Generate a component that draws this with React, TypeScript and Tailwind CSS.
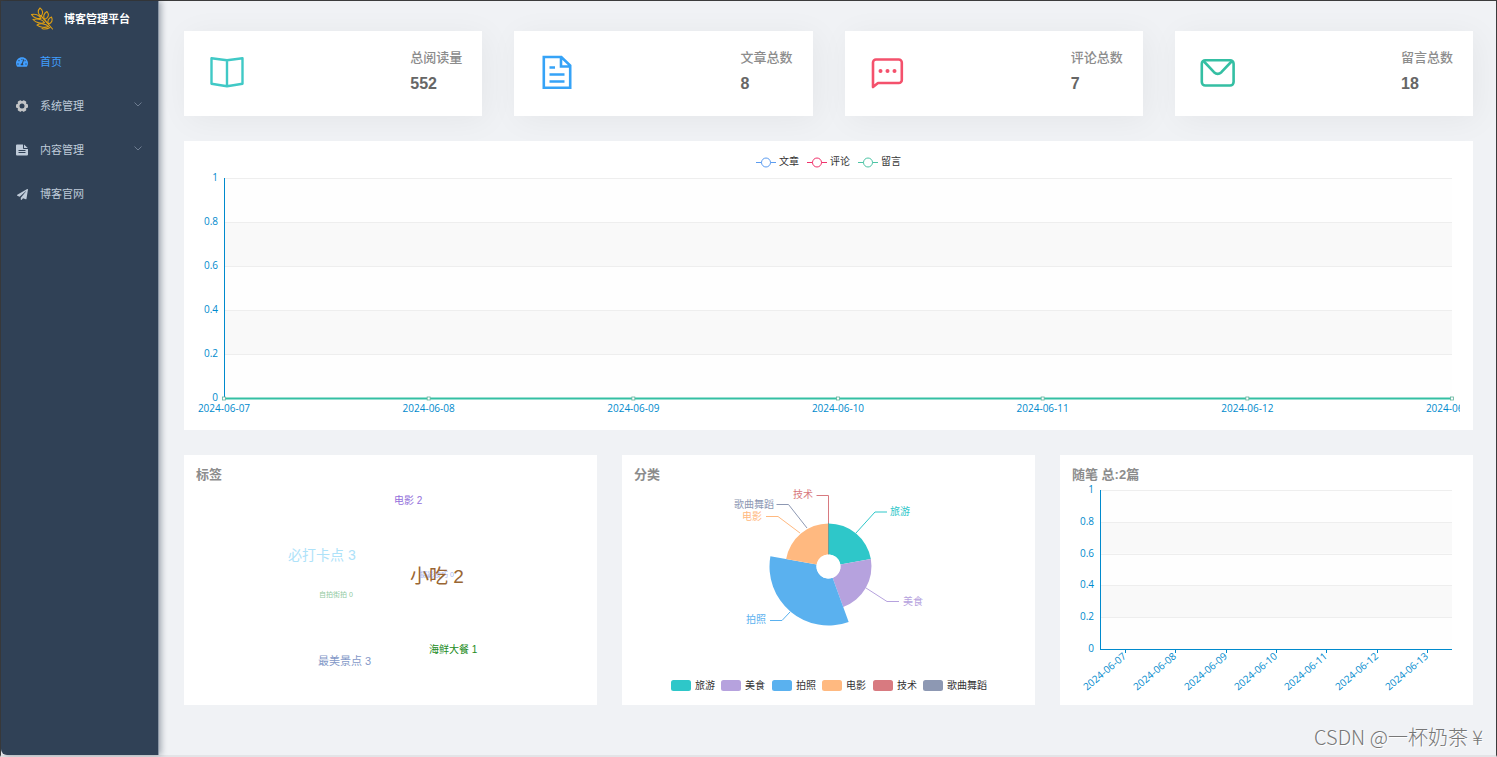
import type { ReactNode } from "react";
import { FaPaperPlane, FaTachometerAlt } from "react-icons/fa";

const DAYS = ["2024-06-07", "2024-06-08", "2024-06-09", "2024-06-10", "2024-06-11", "2024-06-12", "2024-06-13"];
const TICKS = ["0", "0.2", "0.4", "0.6", "0.8", "1"];
const AXIS = "#008acd";

/* ---------- icons ---------- */

function LogoIcon() {
  return (
    <svg viewBox="0 0 24 24" className="size-6" fill="none" stroke="#e0a012" strokeWidth="1.100" strokeLinejoin="round" strokeLinecap="round">
      <path d="M22.500 22C19 18 15 13 10.500 8.500" />
      <path d="M11 9.500C7.500 7 7.500 3.500 10 1c3 2 3.500 5.500 1 8.500z" />
      <path d="M14.500 12.500C13 9.500 14 6.500 17 4.500c2.500 3 1.500 6.500-2.500 8z" />
      <path d="M18.500 17c-1.500-3 0-6 3-7 1.500 3 .5 6-3 7z" />
      <path d="M11 11.500C8 12 3.500 11 1.500 7.500c3.500-1 7.500.5 9.500 4z" />
      <path d="M14.500 15.500c-3 1.500-8.500.5-11.500-3 4-1 8.500-.5 11.500 3z" />
      <path d="M18.500 19.500c-3.500 1.500-8.500 1-11.500-1.500 3.500-2 8.500-1.500 11.500 1.500z" />
      <path d="M20 20.500c-2.500 1.500-5.500 2-8 1" />
    </svg>
  );
}

function GearIcon() {
  return (
    <svg viewBox="0 0 12 12" className="size-3 text-[#c3c5c7]">
      <g fill="currentColor">
        <circle cx="6" cy="6" r="4.900" />
        <rect x="0" y="4" width="12" height="4" rx="1.200" />
        <rect x="0" y="4" width="12" height="4" rx="1.200" transform="rotate(60 6 6)" />
        <rect x="0" y="4" width="12" height="4" rx="1.200" transform="rotate(120 6 6)" />
      </g>
      <circle cx="6" cy="6" r="2.500" fill="#304156" />
    </svg>
  );
}

function DocumentFillIcon() {
  return (
    <svg viewBox="0 0 12 12" className="size-3">
      <path fill="currentColor" d="M1 .5h6v3.500c0 .6.4 1 1 1h4v5.500a1 1 0 0 1-1 1H1a1 1 0 0 1-1-1v-9a1 1 0 0 1 1-1zM8 .5l3.800 3.500H8z" />
      <path stroke="#304156" strokeWidth="1" d="M2.500 6.500h7M2.500 8.500h7" />
    </svg>
  );
}

function ChevronIcon() {
  return (
    <svg viewBox="0 0 8 5" className="mb-1 ml-auto h-[5px] w-2" fill="none" stroke="#7d8ba0" strokeWidth="0.800">
      <path d="M.5.5 4 4 7.500.5" />
    </svg>
  );
}

function BookIcon() {
  return (
    <svg viewBox="0 0 36 36" className="size-9" fill="none" stroke="#40c9c6" strokeWidth="2.400" strokeLinejoin="round">
      <path d="M18 6.300Q10 5.500 2.500 4.300v25.400Q10 31 18 32.200Q26 31 33.500 29.700V4.300Q26 5.500 18 6.300zM18 6.300v25.900" />
    </svg>
  );
}

function ArticleIcon() {
  return (
    <svg viewBox="0 0 36 36" className="size-9" fill="none" stroke="#36a3f7" strokeWidth="2.600">
      <path d="M4.800 3h17.500L31.200 11.500v22.300H4.800zM22 3.500v9h9M10.500 13.500H16M10.500 20.500h15M10.500 27.500h15" />
    </svg>
  );
}

function CommentIcon() {
  return (
    <svg viewBox="0 0 36 36" className="size-9" fill="none" stroke="#f4516c" strokeWidth="2.600" strokeLinejoin="round">
      <path d="M3 33V8.500a3 3 0 0 1 3-3h22.800a3 3 0 0 1 3 3V26a3 3 0 0 1-3 3H8z" />
      <g fill="#f4516c" stroke="none">
        <circle cx="10.500" cy="17" r="2" />
        <circle cx="17.500" cy="17" r="2" />
        <circle cx="24.500" cy="17" r="2" />
      </g>
    </svg>
  );
}

function MailIcon() {
  return (
    <svg viewBox="0 0 36 36" className="size-9" fill="none" stroke="#34bfa3" strokeWidth="2.600" strokeLinejoin="round">
      <rect x="1.800" y="6.200" width="31.800" height="25.300" rx="3.500" />
      <path d="M3.500 7 14 18.200q3.700 3.400 7.400 0L32 7" />
    </svg>
  );
}

/* ---------- sidebar ---------- */

function MenuLabel({ icon, text }: { icon: ReactNode; text: string }) {
  return (
    <>
      <span className="mr-3 flex size-3 shrink-0 items-center justify-center">{icon}</span>
      <span>{text}</span>
    </>
  );
}

function Sidebar() {
  return (
    <aside className="z-10 w-[158px] shrink-0 rounded-bl-md border-r border-[#8a96a5] bg-[#304156] shadow-[2px_0_6px_rgba(0,21,41,0.35)]">
      <div className="mb-[3px] flex h-9 items-center pl-[29px]">
        <LogoIcon />
        <h1 className="ml-[10px] text-[11px] font-bold text-white">博客管理平台</h1>
      </div>
      <nav className="text-[11px] text-[#bfcbd9]">
        <a href="#home" className="flex h-11 items-center px-[15px] text-[#409eff]">
          <MenuLabel icon={<FaTachometerAlt className="size-3" />} text="首页" />
        </a>
        <button type="button" className="flex h-11 w-full items-center pr-4 pl-[15px]">
          <MenuLabel icon={<GearIcon />} text="系统管理" />
          <ChevronIcon />
        </button>
        <button type="button" className="flex h-11 w-full items-center pr-4 pl-[15px]">
          <MenuLabel icon={<DocumentFillIcon />} text="内容管理" />
          <ChevronIcon />
        </button>
        <a href="#site" className="flex h-11 items-center px-[15px]">
          <MenuLabel icon={<FaPaperPlane className="size-[11px]" />} text="博客官网" />
        </a>
      </nav>
    </aside>
  );
}

/* ---------- cards ---------- */

const STATS = [
  { label: "总阅读量", value: 552, icon: <BookIcon /> },
  { label: "文章总数", value: 8, icon: <ArticleIcon /> },
  { label: "评论总数", value: 7, icon: <CommentIcon /> },
  { label: "留言总数", value: 18, icon: <MailIcon /> },
];

function StatCard({ label, value, icon }: { label: string; value: number; icon: ReactNode }) {
  return (
    <div className="flex h-[85px] items-center justify-between bg-white pr-5 pb-[3px] pl-[25px] shadow-[4px_4px_32px_rgba(0,0,0,0.05)]">
      {icon}
      <div>
        <p className="mb-1 text-[13px] leading-5 font-medium text-[#8c8c8c]">{label}</p>
        <p className="text-base leading-6 font-bold text-[#666]">{value}</p>
      </div>
    </div>
  );
}

function Card({ title, children }: { title: string; children: ReactNode }) {
  return (
    <section className="bg-white p-3">
      <h2 className="text-[13px] leading-4 font-bold text-[#8c8c8c]">{title}</h2>
      {children}
    </section>
  );
}

/* ---------- charts ---------- */

function Grid({ left, right, top, bottom }: { left: number; right: number; top: number; bottom: number }) {
  const step = (bottom - top) / 5;
  return (
    <g>
      {TICKS.map((t, i) => {
        const y = Math.round(bottom - i * step);
        return (
          <g key={t}>
            {i < 5 && (
              <rect x={left} y={bottom - (i + 1) * step} width={right - left} height={step} fill={i % 2 ? "#f9f9f9" : "#fefefe"} />
            )}
            {i > 0 && <path d={`M${left} ${y + 0.5}H${right}`} stroke="#eee" />}
            <text x={left - 6} y={y + 3} textAnchor="end" fontSize="10" fill={AXIS}>
              {t}
            </text>
          </g>
        );
      })}
      <path d={`M${left + 0.5} ${top}V${bottom + 1}`} stroke={AXIS} />
    </g>
  );
}

function VisitChart() {
  const legend = [
    { name: "文章", color: "#5b9cf0" },
    { name: "评论", color: "#f0326b" },
    { name: "留言", color: "#4cc4a5" },
  ];
  return (
    <svg viewBox="0 0 1264 265" className="block h-auto w-full" role="img" aria-label="近七日趋势">
      {legend.map((l, i) => (
        <g key={l.name}>
          <path d={`M${560 + i * 51} 9.500h20`} stroke={l.color} />
          <circle cx={570 + i * 51} cy="9.500" r="4.500" fill="#fff" stroke={l.color} />
          <text x={583 + i * 51} y="12" fontSize="10" fill="#333">
            {l.name}
          </text>
        </g>
      ))}
      <Grid left={28} right={1256} top={25} bottom={245} />
      <path d="M28 245.500H1256" stroke="#34bfa3" strokeWidth="2" />
      {DAYS.map((d, i) => {
        const x = 28 + (i * 1228) / 6;
        return (
          <g key={d}>
            <rect x={x - 1.5} y="244" width="3" height="3" fill="#fff" stroke="#5fb39c" strokeWidth="0.800" />
            <text x={x} y="259" textAnchor="middle" fontSize="10" fill={AXIS}>
              {d}
            </text>
          </g>
        );
      })}
    </svg>
  );
}

const TAGS = [
  { text: "电影 2", x: 198, y: 21, size: 10, color: "#9370db" },
  { text: "必打卡点 3", x: 92, y: 77, size: 14, color: "#aee2f9" },
  { text: "摄影技巧 0", x: 224, y: 94, size: 7, color: "#a4b4ee" },
  { text: "小吃 2", x: 214, y: 100, size: 19, color: "#996633" },
  { text: "自拍街拍 0", x: 123, y: 114, size: 7, color: "#8fc9a0" },
  { text: "海鲜大餐 1", x: 233, y: 170, size: 10, color: "#228b22" },
  { text: "最美景点 3", x: 122, y: 182, size: 11, color: "#8499c8" },
];

function TagCloud() {
  return (
    <svg viewBox="0 0 389 210" className="block h-auto w-full" role="img" aria-label="标签云">
      {TAGS.map((t) => (
        <text key={t.text} x={t.x} y={t.y} fontSize={t.size} fill={t.color}>
          {t.text}
        </text>
      ))}
    </svg>
  );
}

const SLICES = [
  { name: "旅游", color: "#2ec7c9", from: 0, to: 80, r: 43, line: "M222 50 241 29h12", tx: 256, ty: 32, lx: 37 },
  { name: "美食", color: "#b6a2de", from: 80, to: 160, r: 43, line: "M232 105 253 118.500h12", tx: 269, ty: 122, lx: 87 },
  { name: "拍照", color: "#5ab1ef", from: 160, to: 280, r: 59, line: "M156 129 148 137.500h-12", tx: 112, ty: 140, lx: 138 },
  { name: "电影", color: "#ffb980", from: 280, to: 360, r: 43, line: "M166 50 144 33.500h-12", tx: 108, ty: 37, lx: 188 },
  { name: "技术", color: "#d87a80", from: 360, to: 360, r: 43, line: "M194.500 83V12.500h-12", tx: 159, ty: 15, lx: 239 },
  { name: "歌曲舞蹈", color: "#8d98b3", from: 360, to: 360, r: 43, line: "M173 45 154.500 21.500h-12", tx: 100, ty: 25, lx: 289 },
];

function polar(r: number, deg: number) {
  const a = (deg * Math.PI) / 180;
  return `${(194.5 + r * Math.sin(a)).toFixed(2)} ${(83.5 - r * Math.cos(a)).toFixed(2)}`;
}

function RosePie() {
  return (
    <svg viewBox="0 0 389 210" className="block h-auto w-full" fontSize="10" role="img" aria-label="文章分类">
      {SLICES.map((s) => (
        <g key={s.name}>
          {s.to > s.from && (
            <path
              fill={s.color}
              d={`M${polar(12, s.from)}L${polar(s.r, s.from)}A${s.r} ${s.r} 0 0 1 ${polar(s.r, s.to)}L${polar(12, s.to)}A12 12 0 0 0 ${polar(12, s.from)}Z`}
            />
          )}
          <path d={s.line} fill="none" stroke={s.color} />
          <text x={s.tx} y={s.ty} fill={s.color}>
            {s.name}
          </text>
          <rect x={s.lx} y="197" width="20" height="11" rx="2.500" fill={s.color} />
          <text x={s.lx + 24} y="206" fill="#333">
            {s.name}
          </text>
        </g>
      ))}
      <path d="M194.500 40V71.500" stroke="#6f9d97" />
      <circle cx="194.500" cy="83.500" r="12" fill="#fff" />
    </svg>
  );
}

function EssayChart() {
  return (
    <svg viewBox="0 0 389 210" className="block h-auto w-full" role="img" aria-label="随笔">
      <Grid left={28} right={380} top={7} bottom={166} />
      <path d="M28 166.500H380" stroke={AXIS} />
      {DAYS.map((d, i) => {
        const x = Math.round(28 + (i + 0.5) * 50.3);
        return (
          <g key={d}>
            <path d={`M${x + 0.5} 167v3`} stroke={AXIS} />
            <text x={x} y="172" dy="3" textAnchor="end" fontSize="10" fill={AXIS} transform={`rotate(-40 ${x} 172)`}>
              {d}
            </text>
          </g>
        );
      })}
    </svg>
  );
}

export default function App() {
  return (
    <div className="relative flex min-h-screen border border-b-2 border-[#3c3c3c] border-b-[#e3e4e7] bg-[#f0f2f5] font-['Liberation_Sans','Noto_Sans_CJK_SC',sans-serif]">
      <Sidebar />
      <main className="flex min-w-0 flex-1 flex-col gap-[25px] pt-[30px] pr-[23px] pb-6 pl-[25px]">
        <div className="grid grid-cols-4 gap-8">
          {STATS.map((s) => (
            <StatCard key={s.label} {...s} />
          ))}
        </div>
        <section className="bg-white py-3 pr-[13px] pl-3 font-['Open_Sans','Noto_Sans_CJK_SC',sans-serif]">
          <VisitChart />
        </section>
        <div className="grid grid-cols-3 gap-[25px]">
          <Card title="标签">
            <TagCloud />
          </Card>
          <Card title="分类">
            <RosePie />
          </Card>
          <Card title="随笔 总:2篇">
            <div className="font-['Open_Sans','Noto_Sans_CJK_SC',sans-serif]">
              <EssayChart />
            </div>
          </Card>
        </div>
      </main>
      <p className="absolute right-[13px] bottom-1 font-['Noto_Sans_CJK_SC',sans-serif] text-xl leading-7 font-light text-[#777] [text-shadow:1px_1px_0_#fff]">
        CSDN @一杯奶茶 ¥
      </p>
    </div>
  );
}
